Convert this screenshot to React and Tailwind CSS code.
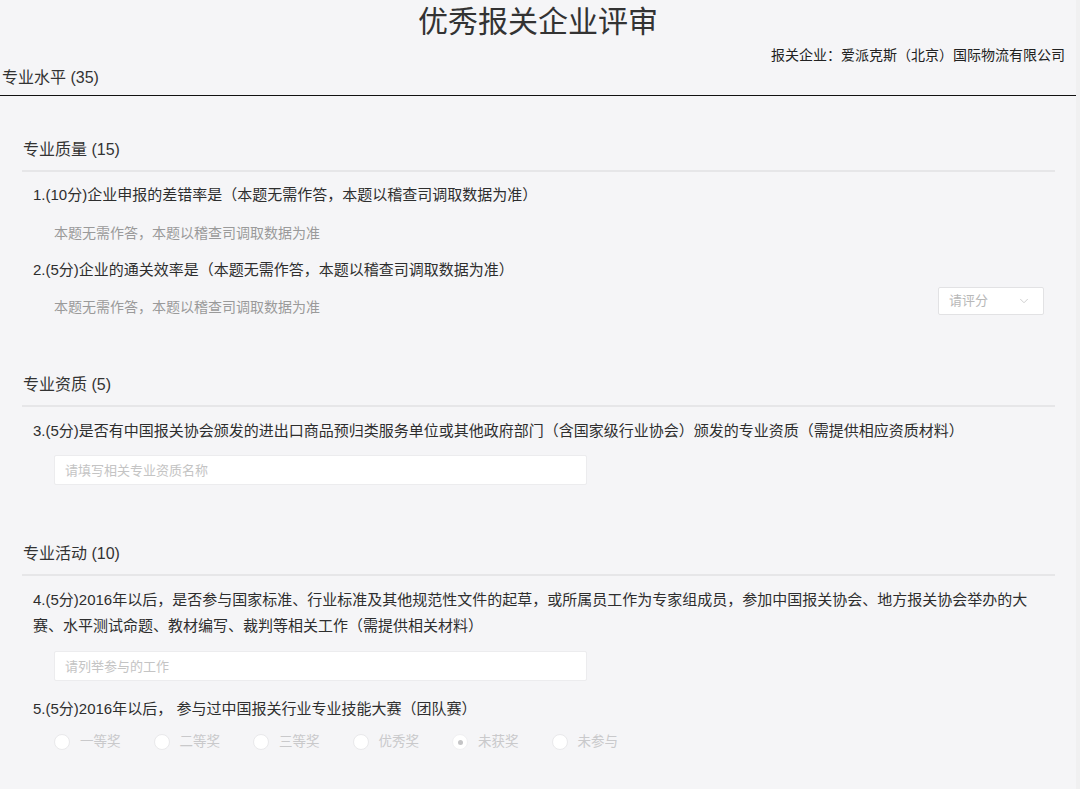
import { ChevronDown } from "lucide-react";

const font = { fontFamily: '"Liberation Sans", "Noto Sans CJK SC", sans-serif' };

const awards = ["一等奖", "二等奖", "三等奖", "优秀奖", "未获奖", "未参与"];

const SectionTitle = ({ children, className = "" }) => (
  <div className={`border-b-2 border-[#e6e6e8] pb-[8px] ${className}`}>
    <h3 className="pl-[1px] text-[16px] leading-[24px] text-[#333]">{children}</h3>
  </div>
);

const Question = ({ children, className = "" }) => (
  <p className={`text-[15px] leading-[24px] text-[#2e2e2e] ${className}`}>{children}</p>
);

const TextInput = ({ placeholder, className = "" }) => (
  <input
    type="text"
    placeholder={placeholder}
    className={`ml-[21px] block h-[30px] w-[533px] rounded-[2px] border border-[#ececee] bg-white px-[10px] text-[13px] text-[#333] outline-none placeholder:text-[#c4c4c4] ${className}`}
  />
);

export default function App() {
  return (
    <div className="flex min-h-screen bg-[#f0f0f1]" style={font}>
      <div className="w-[1076px] bg-[#f5f5f7] pb-10">
        {/* Header */}
        <div className="flex h-[44px] items-center justify-center">
          <h1 className="text-[30px] leading-[40px] text-[#333]">优秀报关企业评审</h1>
        </div>
        <div className="h-[22px] pr-[11px] text-right text-[14px] leading-[22px] text-[#222]">
          报关企业：爱派克斯（北京）国际物流有限公司
        </div>
        <div className="h-[30px] border-b border-[#111] pl-[2px] text-[16px] leading-[24px] text-[#333]">
          专业水平 (35)
        </div>

        <div className="ml-[22px] w-[1033px]">
          {/* 专业质量 */}
          <SectionTitle className="mt-[42px]">专业质量 (15)</SectionTitle>
          <div className="px-[11px]">
            <Question className="mt-[11px]">1.(10分)企业申报的差错率是（本题无需作答，本题以稽查司调取数据为准）</Question>
            <p className="mt-[16px] pl-[21px] text-[14px] leading-[20px] text-[#9a9a9a]">
              本题无需作答，本题以稽查司调取数据为准
            </p>
            <Question className="mt-[15px]">2.(5分)企业的通关效率是（本题无需作答，本题以稽查司调取数据为准）</Question>
            <div className="mt-[5px] flex items-start justify-between">
              <p className="mt-[10px] pl-[21px] text-[14px] leading-[20px] text-[#9a9a9a]">
                本题无需作答，本题以稽查司调取数据为准
              </p>
              <button className="flex h-[28px] w-[106px] items-center justify-between rounded-[2px] border border-[#e2e2e4] bg-white pl-[10px] pr-[12px] text-[13px] text-[#b8b8b8]">
                <span>请评分</span>
                <ChevronDown className="h-[14px] w-[14px] text-[#c8c8c8]" strokeWidth={1.5} />
              </button>
            </div>
          </div>

          {/* 专业资质 */}
          <SectionTitle className="mt-[56px]">专业资质 (5)</SectionTitle>
          <div className="px-[11px]">
            <Question className="mt-[12px]">
              3.(5分)是否有中国报关协会颁发的进出口商品预归类服务单位或其他政府部门（含国家级行业协会）颁发的专业资质（需提供相应资质材料）
            </Question>
            <TextInput placeholder="请填写相关专业资质名称" className="mt-[12px]" />
          </div>

          {/* 专业活动 */}
          <SectionTitle className="mt-[57px]">专业活动 (10)</SectionTitle>
          <div className="px-[11px]">
            <p className="mt-[11px] max-w-[1000px] text-[15px] leading-[26px] text-[#2e2e2e]">
              4.(5分)2016年以后，是否参与国家标准、行业标准及其他规范性文件的起草，或所属员工作为专家组成员，参加中国报关协会、地方报关协会举办的大赛、水平测试命题、教材编写、裁判等相关工作（需提供相关材料）
            </p>
            <TextInput placeholder="请列举参与的工作" className="mt-[12px]" />
            <Question className="mt-[16px]">5.(5分)2016年以后， 参与过中国报关行业专业技能大赛（团队赛）</Question>
            <div className="mt-[11px] flex h-[20px] items-center gap-[33px] pl-[21px]">
              {awards.map((label) => {
                const checked = label === "未获奖";
                return (
                  <label key={label} className="flex items-center gap-[10px] text-[13.5px] text-[#c9c9cb]">
                    <span
                      className={`flex h-[16px] w-[16px] items-center justify-center rounded-full border bg-white ${
                        checked ? "border-[#f0f0f2]" : "border-[#e9e9eb]"
                      }`}
                    >
                      {checked && <span className="h-[5px] w-[5px] rounded-full bg-[#c4c4c6]" />}
                    </span>
                    {label}
                  </label>
                );
              })}
            </div>
          </div>
        </div>
      </div>
    </div>
  );
}
